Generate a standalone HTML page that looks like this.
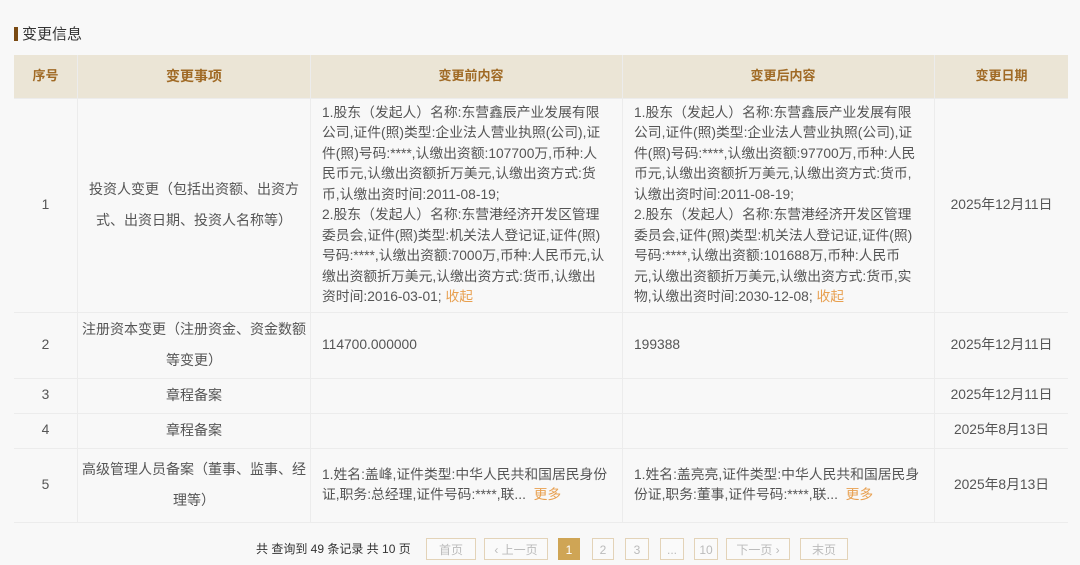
<!DOCTYPE html>
<html><head><meta charset="utf-8"><style>
body{margin:0;width:1080px;height:565px;background:#f8f8f8;font-family:"Liberation Sans","Noto Sans CJK SC",sans-serif;color:#555;overflow:hidden;position:relative}
.t{position:absolute;left:14px;top:23px;font-size:15px;color:#333;}
.t:before{content:"";display:inline-block;width:4px;height:14px;background:#7a4a12;margin-right:4px;vertical-align:-2px}
.tb{position:absolute;left:14px;top:55px;width:1054px}
.row{position:absolute;left:0;width:1054px;border-bottom:1px solid #ececec}
.c{position:absolute;top:0;height:100%;display:flex;align-items:center;font-size:13.8px;line-height:20.5px;box-sizing:border-box;white-space:nowrap}
.h{background:#ebe5d6}
.h .c{color:#a06a25;font-weight:bold;justify-content:center;font-size:13px}
.c1{left:0;width:63px;justify-content:center}
.c2{left:63px;width:233px;justify-content:center;text-align:center;padding:0 4px;border-left:1px solid #ececec;line-height:31px!important;font-size:14px!important}
.c3{left:296px;width:312px;padding:0 2px 0 11px;border-left:1px solid #ececec}
.c4{left:608px;width:312px;padding:0 2px 0 11px;border-left:1px solid #ececec}
.c5{left:920px;width:134px;justify-content:center;border-left:1px solid #ececec}
.o{color:#e8a050}
.pg{position:absolute;top:538px;font-size:12px;height:22px;line-height:22px;border:1px solid #e3d3b8;color:#bbb;text-align:center;box-sizing:border-box;background:#fafafa}
</style></head><body>
<div class="t">变更信息</div>
<div class="tb">
<div class="row h" style="top:0;height:43px"><div class="c c1">序号</div><div class="c c2">变更事项</div><div class="c c3" style="justify-content:center">变更前内容</div><div class="c c4" style="justify-content:center">变更后内容</div><div class="c c5">变更日期</div></div>
<div class="row" style="top:43px;height:214px"><div class="c c1">1</div><div class="c c2"><div>投资人变更（包括出资额、出资方<br>式、出资日期、投资人名称等）</div></div><div class="c c3"><div>1.股东（发起人）名称:东营鑫辰产业发展有限<br>公司,证件(照)类型:企业法人营业执照(公司),证<br>件(照)号码:****,认缴出资额:107700万,币种:人<br>民币元,认缴出资额折万美元,认缴出资方式:货<br>币,认缴出资时间:2011-08-19;<br>2.股东（发起人）名称:东营港经济开发区管理<br>委员会,证件(照)类型:机关法人登记证,证件(照)<br>号码:****,认缴出资额:7000万,币种:人民币元,认<br>缴出资额折万美元,认缴出资方式:货币,认缴出<br>资时间:2016-03-01; <span class="o">收起</span></div></div><div class="c c4"><div>1.股东（发起人）名称:东营鑫辰产业发展有限<br>公司,证件(照)类型:企业法人营业执照(公司),证<br>件(照)号码:****,认缴出资额:97700万,币种:人民<br>币元,认缴出资额折万美元,认缴出资方式:货币,<br>认缴出资时间:2011-08-19;<br>2.股东（发起人）名称:东营港经济开发区管理<br>委员会,证件(照)类型:机关法人登记证,证件(照)<br>号码:****,认缴出资额:101688万,币种:人民币<br>元,认缴出资额折万美元,认缴出资方式:货币,实<br>物,认缴出资时间:2030-12-08; <span class="o">收起</span></div></div><div class="c c5">2025年12月11日</div></div>
<div class="row" style="top:257px;height:66px"><div class="c c1">2</div><div class="c c2"><div>注册资本变更（注册资金、资金数额<br>等变更）</div></div><div class="c c3">114700.000000</div><div class="c c4">199388</div><div class="c c5">2025年12月11日</div></div>
<div class="row" style="top:323px;height:35px"><div class="c c1">3</div><div class="c c2">章程备案</div><div class="c c3"></div><div class="c c4"></div><div class="c c5">2025年12月11日</div></div>
<div class="row" style="top:358px;height:35px"><div class="c c1">4</div><div class="c c2">章程备案</div><div class="c c3"></div><div class="c c4"></div><div class="c c5">2025年8月13日</div></div>
<div class="row" style="top:393px;height:74px"><div class="c c1">5</div><div class="c c2"><div>高级管理人员备案（董事、监事、经<br>理等）</div></div><div class="c c3"><div>1.姓名:盖峰,证件类型:中华人民共和国居民身份<br>证,职务:总经理,证件号码:****,联... <span class="o">&nbsp;更多</span></div></div><div class="c c4"><div>1.姓名:盖亮亮,证件类型:中华人民共和国居民身<br>份证,职务:董事,证件号码:****,联... <span class="o">&nbsp;更多</span></div></div><div class="c c5">2025年8月13日</div></div>
</div>
<div style="position:absolute;left:256px;top:538px;font-size:12px;line-height:22px;color:#333">共 查询到 49 条记录 共 10 页</div>
<div class="pg" style="left:426px;width:50px">首页</div>
<div class="pg" style="left:484px;width:64px">‹ 上一页</div>
<div class="pg" style="left:558px;width:22px;background:#cfa555;border-color:#cfa555;color:#fff">1</div>
<div class="pg" style="left:592px;width:22px">2</div>
<div class="pg" style="left:625px;width:24px">3</div>
<div class="pg" style="left:660px;width:24px">...</div>
<div class="pg" style="left:694px;width:24px">10</div>
<div class="pg" style="left:726px;width:64px">下一页 ›</div>
<div class="pg" style="left:800px;width:48px">末页</div>
</body></html>
